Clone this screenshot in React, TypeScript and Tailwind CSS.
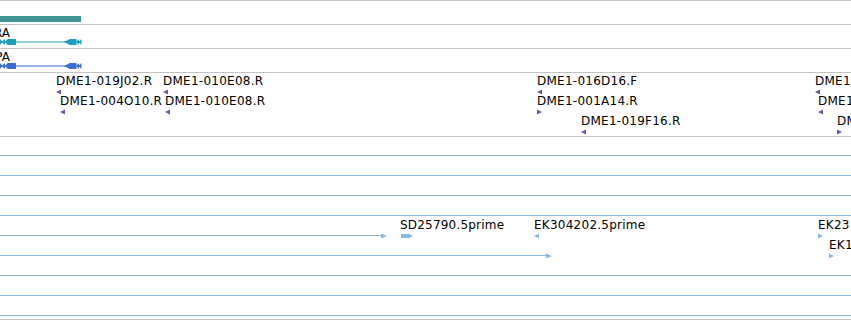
import React from "react";

const PURPLE = "#6f54aa";
const LBLUE = "#88b9e0";
const FONT = { fontFamily: '"DejaVu Sans", sans-serif' };

type Feat = { x: number; y: number; label: string; dir: "l" | "r"; color: string };

function Arrow({ dir, color }: { dir: "l" | "r"; color: string }) {
  return (
    <svg width="6" height="6" viewBox="0 0 6 6" className="block">
      {dir === "l" ? (
        <polygon points="0,3 5,0.5 5,5.5" fill={color} />
      ) : (
        <polygon points="5,3 0,0.5 0,5.5" fill={color} />
      )}
    </svg>
  );
}

function Feature({ f }: { f: Feat }) {
  return (
    <div className="absolute flex flex-col items-start" style={{ left: f.x, top: f.y }}>
      <span className="text-[12px] leading-[14px] text-black whitespace-nowrap tracking-[0.25px]">
        {f.label}
      </span>
      <div className="mt-[1px]">
        <Arrow dir={f.dir} color={f.color} />
      </div>
    </div>
  );
}

const dmeFeats: Feat[] = [
  { x: 56, y: 1, label: "DME1-019J02.R", dir: "l", color: PURPLE },
  { x: 163, y: 1, label: "DME1-010E08.R", dir: "l", color: PURPLE },
  { x: 537, y: 1, label: "DME1-016D16.F", dir: "l", color: PURPLE },
  { x: 815, y: 1, label: "DME1-016D16.F", dir: "l", color: PURPLE },
  { x: 60, y: 21, label: "DME1-004O10.R", dir: "l", color: PURPLE },
  { x: 165, y: 21, label: "DME1-010E08.R", dir: "l", color: PURPLE },
  { x: 537, y: 21, label: "DME1-001A14.R", dir: "r", color: PURPLE },
  { x: 818, y: 21, label: "DME1-001A14.R", dir: "l", color: PURPLE },
  { x: 581, y: 41, label: "DME1-019F16.R", dir: "l", color: PURPLE },
  { x: 837, y: 41, label: "DME1-019F16.R", dir: "r", color: PURPLE },
];

const estFeats: Feat[] = [
  { x: 534, y: 81, label: "EK304202.5prime", dir: "l", color: LBLUE },
  { x: 818, y: 81, label: "EK23 1104.5prime", dir: "r", color: LBLUE },
  { x: 829, y: 101, label: "EK123456.5prime", dir: "r", color: LBLUE },
];

function TranscriptGlyph({ color }: { color: string }) {
  return (
    <svg width="82" height="8" viewBox="0 0 82 8" className="block">
      <line x1="14" y1="4" x2="68" y2="4" stroke={color} strokeWidth="1" />
      <polygon points="0,1 2.5,4 0,7" fill={color} />
      <polygon points="1.5,4 5,1 5,7" fill={color} />
      <polygon points="4.5,4 8,1 8,7" fill={color} />
      <rect x="7.5" y="1" width="8.5" height="6" fill={color} />
      <polygon points="64,4 70,1 70,7" fill={color} />
      <rect x="69.5" y="1" width="7" height="6" fill={color} />
      <polygon points="76,4 79,1 79,7" fill={color} />
      <polygon points="78.5,4 81.5,1 81.5,7" fill={color} />
    </svg>
  );
}

function Rule({ width, arrow }: { width?: number; arrow?: boolean }) {
  return (
    <div className="h-[1px] flex items-center">
      <div className="h-[1px] bg-[#88b9e0] flex-none" style={{ width: width ?? 851 }} />
      {arrow && (
        <svg className="flex-none -ml-[1px]" width="6" height="6" viewBox="0 0 6 6">
          <polygon points="6,3 0,0.5 0,5.5" fill={LBLUE} />
        </svg>
      )}
    </div>
  );
}

export default function App() {
  return (
    <div className="w-[851px] h-[320px] bg-white overflow-hidden flex flex-col" style={FONT}>
      {/* track: gene span */}
      <div className="h-[24px] border-t border-[#c3c3c3] pt-[15px]">
        <div className="w-[81px] h-[6px] bg-[#3f9393]" />
      </div>
      {/* track: transcript */}
      <div className="relative h-[24px] border-t border-[#c3c3c3]">
        <span className="absolute right-[841px] top-[1px] text-[12px] leading-[14px] whitespace-nowrap text-black">CG1234-RA</span>
        <div className="absolute left-0 top-[13px]">
          <TranscriptGlyph color="#1b9fbd" />
        </div>
      </div>
      {/* track: protein */}
      <div className="relative h-[24px] border-t border-[#c3c3c3]">
        <span className="absolute right-[841px] top-[1px] text-[12px] leading-[14px] whitespace-nowrap text-black">CG1234-PA</span>
        <div className="absolute left-0 top-[13px]">
          <TranscriptGlyph color="#3a6fd2" />
        </div>
      </div>
      {/* track: BAC ends */}
      <div className="relative h-[64px] border-t border-[#c3c3c3]">
        {dmeFeats.map((f, i) => (
          <Feature key={i} f={f} />
        ))}
      </div>
      {/* track: ESTs */}
      <div className="relative h-[184px] border-t border-b border-[#c3c3c3] pt-[18px] flex flex-col gap-[19px]">
        <Rule />
        <Rule />
        <Rule />
        <Rule />
        <Rule width={382} arrow />
        <Rule width={547} arrow />
        <Rule />
        <Rule />
        <Rule />
        <div className="absolute left-[400px] top-[81px] flex flex-col items-start">
          <span className="text-[12px] leading-[14px] text-black whitespace-nowrap tracking-[0.2px]">SD25790.5prime</span>
          <svg className="mt-[1px] ml-[1px]" width="13" height="6" viewBox="0 0 13 6">
            <rect x="0" y="1" width="8" height="4" fill={LBLUE} />
            <polygon points="12,3 7,0.5 7,5.5" fill={LBLUE} />
          </svg>
        </div>
        {estFeats.map((f, i) => (
          <Feature key={i} f={f} />
        ))}
      </div>
    </div>
  );
}
